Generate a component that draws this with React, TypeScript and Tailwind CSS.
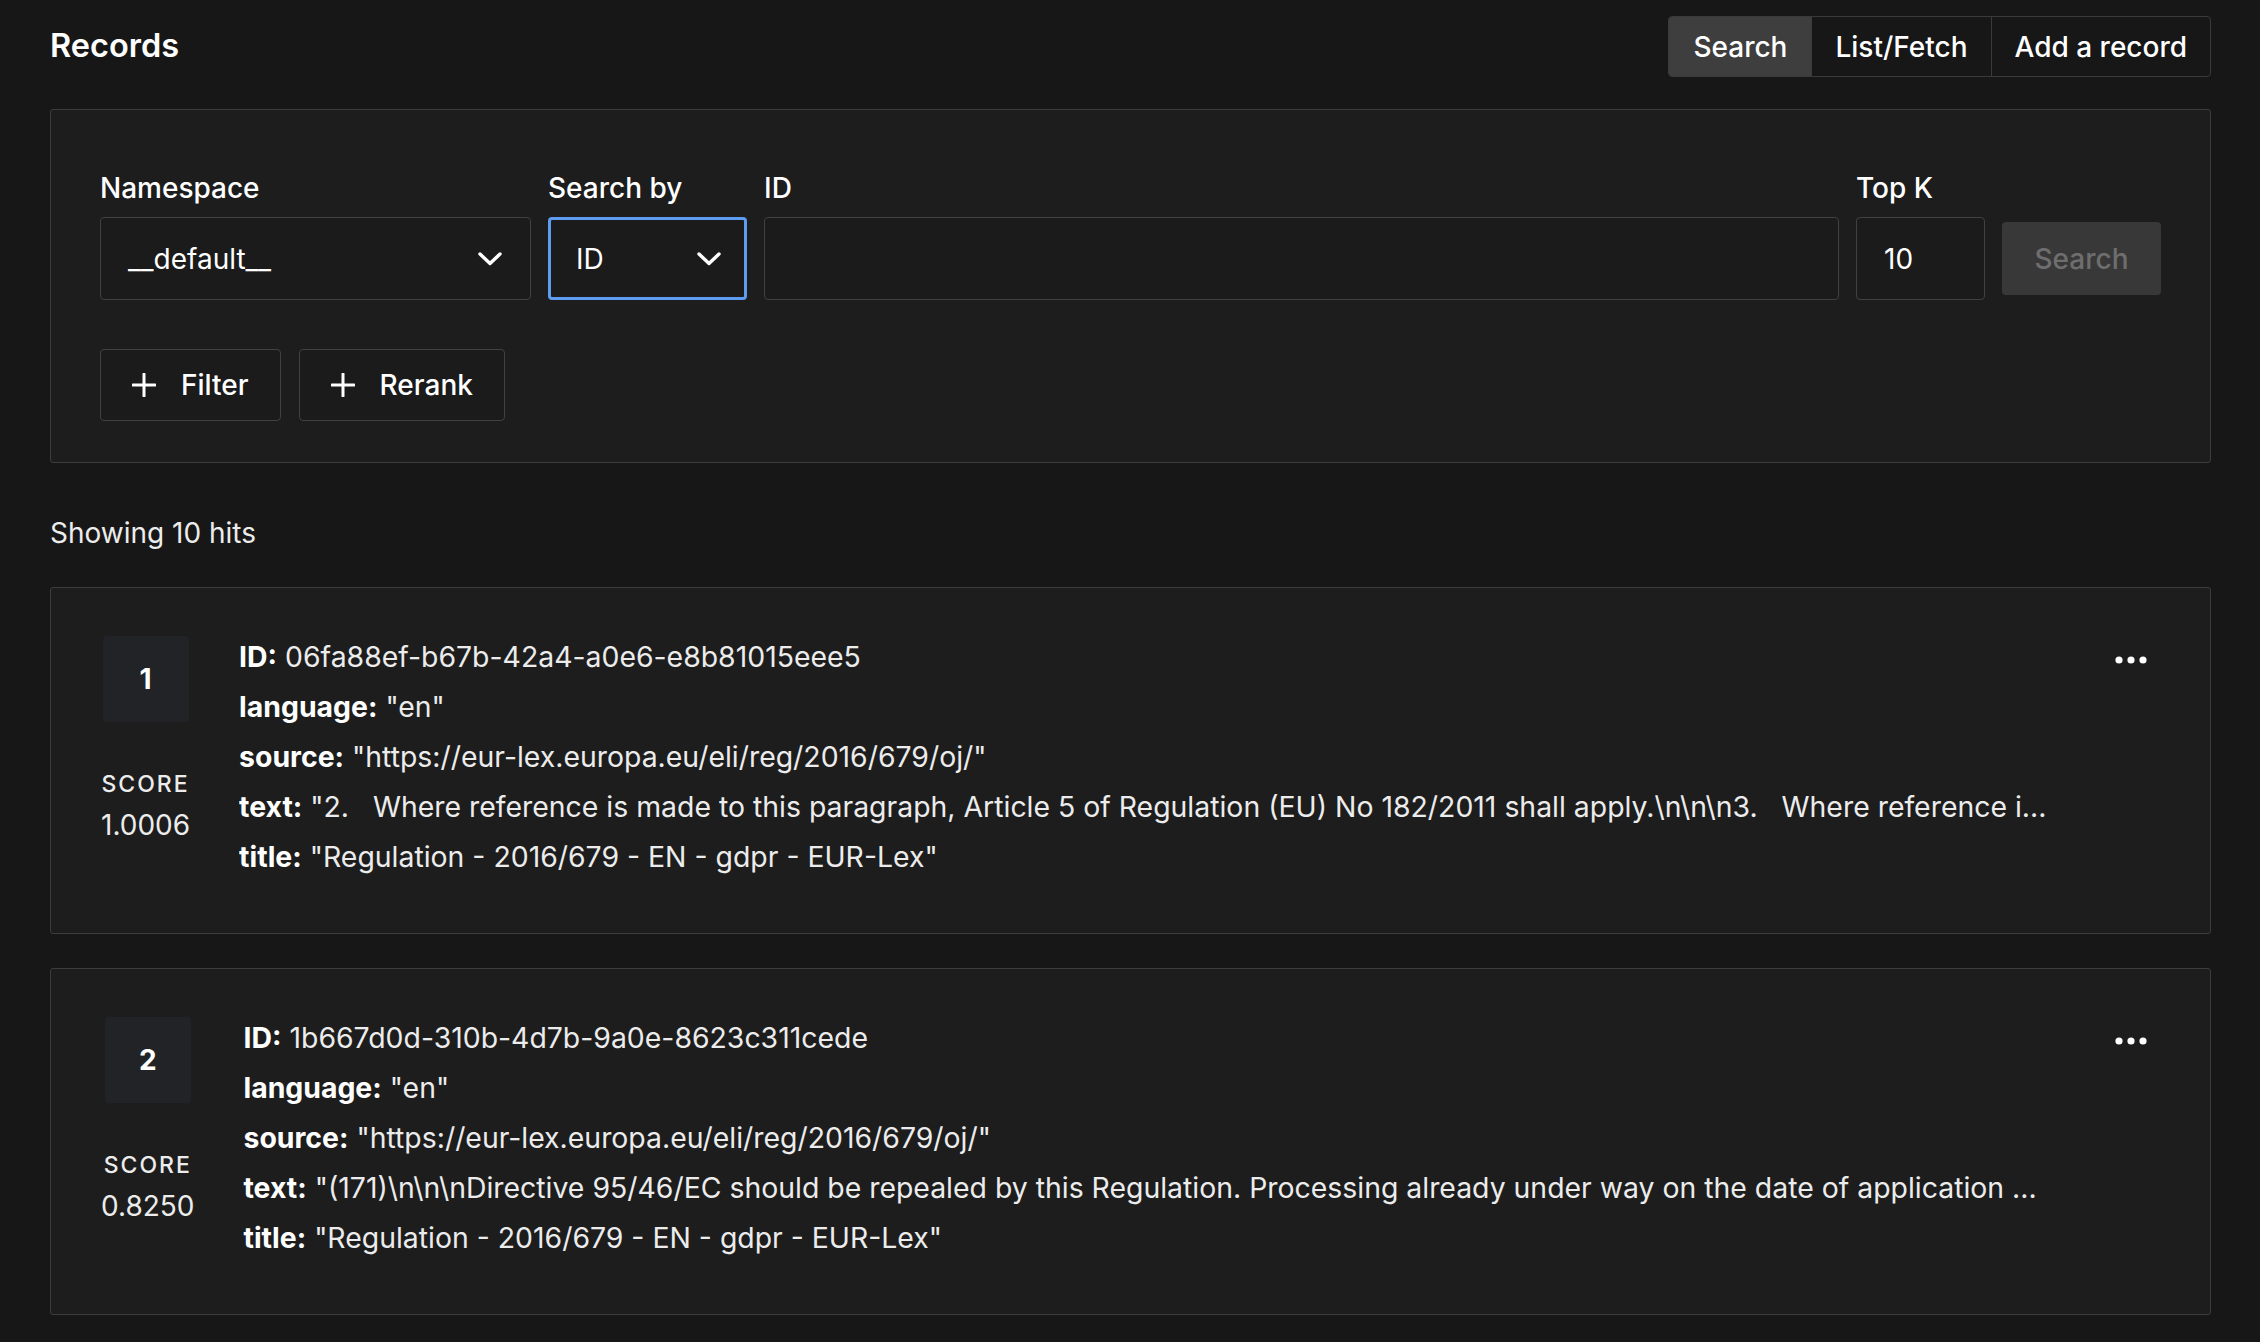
import React from "react";

const Chevron = () => (
  <svg width="24" height="14" viewBox="0 0 24 14" fill="none">
    <polyline points="2,2 12,11.5 22,2" stroke="#ffffff" strokeWidth="3.4" strokeLinecap="round" strokeLinejoin="round" />
  </svg>
);

const Plus = () => (
  <svg width="24" height="24" viewBox="0 0 24 24" fill="none">
    <line x1="12" y1="1" x2="12" y2="23" stroke="#ffffff" strokeWidth="3" strokeLinecap="round" />
    <line x1="1" y1="12" x2="23" y2="12" stroke="#ffffff" strokeWidth="3" strokeLinecap="round" />
  </svg>
);

const Dots = () => (
  <svg width="32" height="8" viewBox="0 0 32 8" fill="#ffffff">
    <circle cx="4" cy="4" r="3.6" />
    <circle cx="16" cy="4" r="3.6" />
    <circle cx="28" cy="4" r="3.6" />
  </svg>
);

type Hit = {
  rank: number;
  score: string;
  id: string;
  language: string;
  source: string;
  text: string;
  title: string;
};

const hits: Hit[] = [
  {
    rank: 1,
    score: "1.0006",
    id: "06fa88ef-b67b-42a4-a0e6-e8b81015eee5",
    language: '"en"',
    source: '"https://eur-lex.europa.eu/eli/reg/2016/679/oj/"',
    text: '"2.   Where reference is made to this paragraph, Article 5 of Regulation (EU) No 182/2011 shall apply.\\n\\n\\n3.   Where reference i...',
    title: '"Regulation - 2016/679 - EN - gdpr - EUR-Lex"',
  },
  {
    rank: 2,
    score: "0.8250",
    id: "1b667d0d-310b-4d7b-9a0e-8623c311cede",
    language: '"en"',
    source: '"https://eur-lex.europa.eu/eli/reg/2016/679/oj/"',
    text: '"(171)\\n\\n\\nDirective 95/46/EC should be repealed by this Regulation. Processing already under way on the date of application ...',
    title: '"Regulation - 2016/679 - EN - gdpr - EUR-Lex"',
  },
];

function Field({ k, v }: { k: string; v: string }) {
  return (
    <div className="leading-[50px] text-[28.4px] whitespace-pre overflow-hidden text-ellipsis text-[#ececec]">
      <span className="font-bold text-white">{k}:</span> {v}
    </div>
  );
}

function HitCard({ hit }: { hit: Hit }) {
  return (
    <div className="flex items-start border border-[#3d3d3d] rounded-[3px] bg-[#1d1d1d] pt-[44px] pb-[51px] pl-[50px] pr-[51px]">
      <div className="flex flex-col items-center mt-[4px] shrink-0">
        <div className="w-[86px] h-[86px] rounded-[4px] bg-[#222327] flex items-center justify-center text-[28px] font-bold text-white">
          {hit.rank}
        </div>
        <div className="mt-[46px] text-[23px] leading-[32px] tracking-[2px] font-medium text-[#ececec]">SCORE</div>
        <div className="mt-[7px] text-[28px] leading-[36px] text-[#ececec]">{hit.score}</div>
      </div>
      <div className="ml-[49px] flex-1 min-w-0">
        <Field k="ID" v={hit.id} />
        <Field k="language" v={hit.language} />
        <Field k="source" v={hit.source} />
        <Field k="text" v={hit.text} />
        <Field k="title" v={hit.title} />
      </div>
      <button className="w-[56px] h-[56px] shrink-0 flex items-center justify-center">
        <Dots />
      </button>
    </div>
  );
}

export default function App() {
  return (
    <div
      className="min-h-screen bg-[#171717] text-white pl-[50px] pr-[49px] pt-[16px] pb-[40px]"
      style={{ fontFamily: "Inter, 'Noto Sans', sans-serif" }}
    >
      <div className="flex items-center justify-between h-[61px]">
        <h1 className="text-[32.5px] font-semibold text-white">Records</h1>
        <div className="flex h-[61px] border border-[#3a3a3a] rounded-[4px] overflow-hidden bg-[#171717]">
          <button className="px-[24px] text-[28px] font-medium bg-[#3e3e3e] text-white">Search</button>
          <button className="px-[23px] text-[28px] font-medium text-white border-l border-[#3a3a3a]">List/Fetch</button>
          <button className="px-[23px] text-[28px] font-medium text-white border-l border-[#3a3a3a]">Add a record</button>
        </div>
      </div>

      <div className="mt-[32px] border border-[#3d3d3d] rounded-[3px] bg-[#1d1d1d] pt-[57px] pb-[41px] px-[49px]">
        <div className="flex items-end gap-[17px]">
          <div className="w-[431px] shrink-0">
            <div className="text-[28px] leading-[42px] font-medium mb-[8px]">Namespace</div>
            <div className="h-[83px] border border-[#414141] rounded-[4px] bg-[#1b1b1b] flex items-center justify-between pl-[27px] pr-[28px]">
              <span className="text-[28px]">__default__</span>
              <Chevron />
            </div>
          </div>
          <div className="w-[199px] shrink-0">
            <div className="text-[28px] leading-[42px] font-medium mb-[8px]">Search by</div>
            <div className="h-[83px] border-[3px] border-[#5d9cf0] rounded-[4px] bg-[#1b1b1b] flex items-center justify-between pl-[25px] pr-[23px]">
              <span className="text-[28px]">ID</span>
              <Chevron />
            </div>
          </div>
          <div className="flex-1 min-w-0">
            <div className="text-[28px] leading-[42px] font-medium mb-[8px]">ID</div>
            <div className="h-[83px] border border-[#414141] rounded-[4px] bg-[#1b1b1b]" />
          </div>
          <div className="w-[129px] shrink-0">
            <div className="text-[28px] leading-[42px] font-medium mb-[8px]">Top K</div>
            <div className="h-[83px] border border-[#414141] rounded-[4px] bg-[#1b1b1b] flex items-center pl-[27px]">
              <span className="text-[28px]">10</span>
            </div>
          </div>
          <button className="w-[159px] h-[73px] mb-[5px] shrink-0 rounded-[4px] bg-[#383838] text-[#6e6e6e] text-[28px] font-medium">
            Search
          </button>
        </div>
        <div className="mt-[49px] flex gap-[18px]">
          <button className="h-[72px] border border-[#414141] rounded-[4px] bg-[#1b1b1b] flex items-center gap-[25px] px-[31px] text-[28px] font-medium">
            <Plus />
            <span>Filter</span>
          </button>
          <button className="h-[72px] border border-[#414141] rounded-[4px] bg-[#1b1b1b] flex items-center gap-[25px] px-[31px] text-[28px] font-medium">
            <Plus />
            <span>Rerank</span>
          </button>
        </div>
      </div>

      <div className="mt-[49px] text-[28px] leading-[42px] text-[#ececec]">Showing 10 hits</div>

      <div className="mt-[33px] flex flex-col gap-[34px]">
        {hits.map((h) => (
          <HitCard key={h.rank} hit={h} />
        ))}
      </div>
    </div>
  );
}
